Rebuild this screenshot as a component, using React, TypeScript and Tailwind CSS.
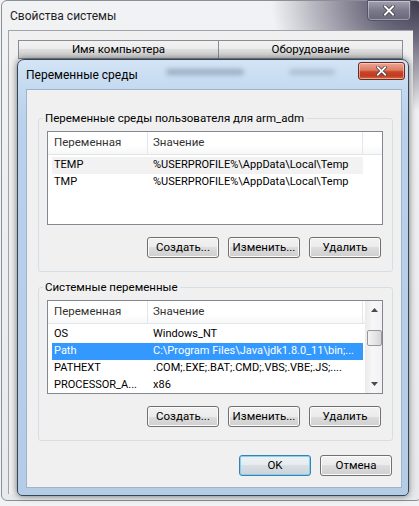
import React from 'react';

const font = "font-['Roboto','Noto_Sans',sans-serif]";

const CloseGlyph = ({ className }: { className?: string }) => (
  <svg viewBox="0 0 12 11" className={className}>
    <path d="M2 1.5 L10 9.5 M10 1.5 L2 9.5" stroke="#3b3b44" strokeWidth="3.6" strokeLinecap="square" />
    <path d="M2 1.5 L10 9.5 M10 1.5 L2 9.5" stroke="#ffffff" strokeWidth="2" strokeLinecap="square" />
  </svg>
);

const WinButton = ({ label, primary }: { label: string; primary?: boolean }) => (
  <button
    className={
      'flex h-[21px] w-[72px] items-center justify-center rounded-[3px] border text-[11.5px] leading-none text-black ' +
      (primary
        ? 'border-[#3c7fb1] bg-[linear-gradient(180deg,#edf1f4_0%,#e6ebef_50%,#d8dee3_50%,#ccd3d9_100%)] shadow-[inset_0_0_0_1px_#7fd3f1]'
        : 'border-[#707070] bg-[linear-gradient(180deg,#f2f2f2_0%,#ebebeb_50%,#dddddd_50%,#cfcfcf_100%)] shadow-[inset_0_0_0_1px_#fbfbfb]')
    }
  >
    {label}
  </button>
);

type Row = { name: string; value: string; state?: 'selected' | 'faint' };

const ListView = ({ rows, scroll }: { rows: Row[]; scroll?: boolean }) => (
  <div className="flex h-[94px] w-[336px] overflow-hidden border border-[#828790] bg-white">
    <div className="flex min-w-0 flex-1 flex-col">
      <div className="flex h-[23px] shrink-0 items-center border-b border-[#e5e5e5] bg-[linear-gradient(180deg,#ffffff_0%,#ffffff_60%,#f6f7f8_100%)] text-[#333333]">
        <div className="flex h-full w-[100px] shrink-0 items-center border-r border-[#e3e6ea] pl-[6px]">Переменная</div>
        <div className="flex h-full w-[215px] shrink-0 items-center border-r border-[#e3e6ea] pl-[5px]">Значение</div>
        <div className="flex-1" />
      </div>
      <div className="mt-[2px] flex flex-col text-[11px]">
        {rows.map((r) => (
          <div
            key={r.name}
            className={
              'ml-[4px] flex h-[17px] w-[311px] shrink-0 items-center overflow-hidden whitespace-nowrap ' +
              (r.state === 'selected'
                ? 'bg-[#3399ff] text-white'
                : r.state === 'faint'
                ? 'bg-[#f2f2f2] text-black'
                : 'text-black')
            }
          >
            <div className="w-[96px] shrink-0 pl-[2px]">{r.name}</div>
            <div className="shrink-0 pl-[5px]">{r.value}</div>
          </div>
        ))}
      </div>
    </div>
    {scroll && (
      <div className="flex w-[17px] shrink-0 flex-col items-center border-l border-[#ececec] bg-[linear-gradient(90deg,#ececec,#f7f7f7_40%,#f2f2f2)]">
        <svg viewBox="0 0 7 4" className="mt-[7px] h-[4px] w-[7px]">
          <path d="M3.5 0 L7 4 L0 4 Z" fill="#4b4b4b" />
        </svg>
        <div className="mt-[18px] h-[16px] w-[15px] rounded-[2px] border border-[#979797] bg-[linear-gradient(90deg,#f4f4f4,#e6e6e6_50%,#d6d6d6)]" />
        <div className="flex-1" />
        <svg viewBox="0 0 7 4" className="mb-[7px] h-[4px] w-[7px]">
          <path d="M0 0 L7 0 L3.5 4 Z" fill="#4b4b4b" />
        </svg>
      </div>
    )}
  </div>
);

const Group = ({ title, children }: { title: string; children: React.ReactNode }) => (
  <fieldset className="w-[355px] rounded-[3px] border border-[#d5dfe5] px-[8px] pb-[13px]">
    <legend className="ml-[-4px] px-[2px] leading-[16px] text-black">{title}</legend>
    {children}
  </fieldset>
);

export default function App() {
  const userVars: Row[] = [
    { name: 'TEMP', value: '%USERPROFILE%\\AppData\\Local\\Temp', state: 'faint' },
    { name: 'TMP', value: '%USERPROFILE%\\AppData\\Local\\Temp' },
  ];
  const sysVars: Row[] = [
    { name: 'OS', value: 'Windows_NT' },
    { name: 'Path', value: 'C:\\Program Files\\Java\\jdk1.8.0_11\\bin;...', state: 'selected' },
    { name: 'PATHEXT', value: '.COM;.EXE;.BAT;.CMD;.VBS;.VBE;.JS;....' },
    { name: 'PROCESSOR_A...', value: 'x86' },
  ];

  return (
    <div className={`relative h-[506px] w-[419px] overflow-hidden bg-[#f2f2f2] text-[11.5px] ${font}`}>
      {/* outer window: Свойства системы */}
      <div className="relative ml-[1px] flex h-[501px] w-[421px] flex-col rounded-[6px] border border-[#8b8f96] bg-[radial-gradient(ellipse_150px_110px_at_100%_0%,#3c384a_0%,#6e6b7e_35%,rgba(232,234,238,0)_100%),linear-gradient(180deg,#f1f2f4,#e7e9ec)] pb-[6px] pl-[6px] pr-[8px]">
        <div className="flex h-[29px] shrink-0 items-center pl-[2px] text-[12px] text-[#1e1e1e]">Свойства системы</div>
        <div className="absolute right-[10px] top-[-1px] flex h-[21px] w-[44px] items-center justify-center rounded-b-[4px] border border-[#55536a] bg-[linear-gradient(180deg,#a3a1b0,#7b798c_50%,#686679)] shadow-[inset_0_0_0_1px_rgba(255,255,255,0.35)]">
          <CloseGlyph className="h-[11px] w-[12px]" />
        </div>
        <div className="flex-1 border-l border-t border-[#a0a5ab] bg-[#f0f0f0] pl-[9px] pt-[9px]">
          <div className="flex">
            <div className="flex h-[19px] w-[201px] items-center justify-center border border-[#898c95] bg-[linear-gradient(180deg,#f2f2f2,#ebebeb_50%,#dddddd_50%,#cfcfcf)]">
              Имя компьютера
            </div>
            <div className="flex h-[19px] w-[184px] items-center justify-center border border-l-0 border-[#898c95] bg-[linear-gradient(180deg,#f2f2f2,#ebebeb_50%,#dddddd_50%,#cfcfcf)]">
              Оборудование
            </div>
          </div>
        </div>
      </div>

      {/* inner dialog: Переменные среды */}
      <div className="absolute left-[17px] top-[59px] flex h-[437px] w-[392px] flex-col rounded-t-[7px] rounded-b-[5px] border border-[#34465a] bg-[linear-gradient(180deg,#d3e4f5_0px,#c4daf0_28px,#b9d1ea_60px,#b4cce6_100%)] pb-[7px] pl-[8px] pr-[6px] shadow-[0_0_7px_rgba(0,0,0,0.55)]">
        <div className="flex h-[29px] shrink-0 items-center text-[12px] text-black">
          <span>Переменные среды</span>
          {/* blurred tab captions of the window behind the glass */}
          <div className="mb-[6px] ml-[28px] h-[6px] w-[78px] rounded-full bg-[#8597ad] opacity-70 blur-[2.5px]" />
          <div className="mb-[6px] ml-[45px] h-[6px] w-[46px] rounded-full bg-[#9aabbf] opacity-60 blur-[2.5px]" />
        </div>
        <div className="absolute right-[3px] top-[2px] flex h-[18px] w-[47px] items-center justify-center rounded-[3px] border border-[#6e2a1e] bg-[linear-gradient(180deg,#eba896_0%,#dd7b62_45%,#c8452a_55%,#c23b1d_80%,#d46a45_100%)] shadow-[inset_0_0_0_1px_rgba(255,225,215,0.55)]">
          <CloseGlyph className="h-[10px] w-[11px]" />
        </div>
        <div className="flex flex-1 flex-col border border-[#9fb4cc] bg-[#f0f0f0] pl-[11px] pt-[20px]">
          <Group title="Переменные среды пользователя для arm_adm">
            <div className="mt-[5px]">
              <ListView rows={userVars} />
            </div>
            <div className="mt-[12px] flex w-[336px] justify-end gap-[9px] pr-[2px]">
              <WinButton label="Создать..." />
              <WinButton label="Изменить..." />
              <WinButton label="Удалить" />
            </div>
          </Group>
          <div className="mt-[7px]">
            <Group title="Системные переменные">
              <div className="mt-[5px]">
                <ListView rows={sysVars} scroll />
              </div>
              <div className="mt-[12px] flex w-[336px] justify-end gap-[9px] pr-[2px]">
                <WinButton label="Создать..." />
                <WinButton label="Изменить..." />
                <WinButton label="Удалить" />
              </div>
            </Group>
          </div>
          <div className="mt-[14px] flex w-[355px] justify-end gap-[9px] pr-[1px]">
            <WinButton label="OK" primary />
            <WinButton label="Отмена" />
          </div>
        </div>
      </div>
    </div>
  );
}
